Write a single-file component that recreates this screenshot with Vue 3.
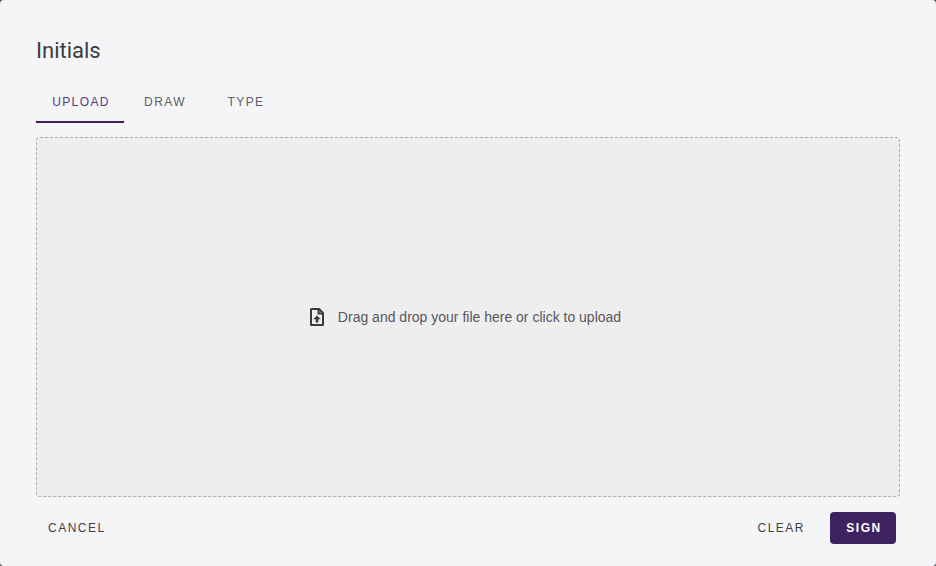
<script setup>
const tabs = ['UPLOAD', 'DRAW', 'TYPE']
</script>

<template>
  <div class="dialog">
    <h2 class="title">Initials</h2>
    <div class="tabs">
      <button v-for="(t, i) in tabs" :key="t" class="tab" :class="[{ active: i === 0 }, 't' + i]">{{ t }}</button>
    </div>
    <div class="drop">
      <svg class="icon" width="24" height="24" viewBox="0 0 24 24" fill="none">
        <path d="M6.500 4h7.500l4 4v11.500a.5.5 0 0 1-.5.5h-11a.5.5 0 0 1-.5-.5v-15a.5.5 0 0 1 .5-.5z" stroke="#3a3a3d" stroke-width="2" stroke-linejoin="round"/>
        <path d="M13.500 3.500v5h5" stroke="#3a3a3d" stroke-width="2"/>
        <path d="M12 10.500l3.700 3.700h-2.400v3.300h-2.600v-3.300h-2.400z" fill="#3a3a3d"/>
      </svg>
      <span class="hint">Drag and drop your file here or click to upload</span>
    </div>
    <div class="actions">
      <button class="btn text">CANCEL</button>
      <div class="right">
        <button class="btn text clear">CLEAR</button>
        <button class="btn primary">SIGN</button>
      </div>
    </div>
  </div>
</template>

<style>
html, body { margin: 0; background: #55555a; }
</style>

<style scoped>
.dialog {
  box-sizing: border-box;
  width: 936px;
  height: 566px;
  background: #f5f5f8;
  border-radius: 4px;
  padding: 36px 36px 22px;
  display: flex;
  flex-direction: column;
  font-family: "Liberation Sans", Arial, sans-serif;
}
.title {
  margin: 0;
  font: 400 22px/29px Roboto, sans-serif;
  color: #3c3c3f;
}
.tabs {
  display: flex;
  margin-top: 15px;
  height: 43px;
}
.tab {
  border: 0;
  background: none;
  padding: 2px 0 0;
  height: 43px;
  font: 400 12px/16px "Liberation Sans", Arial, sans-serif;
  letter-spacing: 1.4px;
  color: #5c5c62;
  box-sizing: border-box;
  border-bottom: 2px solid transparent;
}
.t0 { width: 88px; padding-left: 2px; }
.t1 { width: 82px; }
.t2 { width: 80px; }
.tab.active {
  color: #54397e;
  border-bottom-color: #3f2361;
}
.drop {
  flex: 1;
  margin-top: 14px;
  background: #eeeeef;
  border: 1px dashed #adadb0;
  border-radius: 4px;
  display: flex;
  align-items: center;
  justify-content: center;
  gap: 9px;
  padding: 0 4px 1px 0;
}
.icon { flex: none; margin-left: -6px; }
.hint {
  font-size: 14px;
  line-height: 20px;
  color: #57575c;
}
.actions {
  display: flex;
  justify-content: space-between;
  align-items: center;
  margin-top: 15px;
  height: 32px;
  padding: 0 4px;
}
.right { display: flex; align-items: center; gap: 17px; }
.btn {
  height: 32px;
  border: 0;
  border-radius: 4px;
  font: 400 12px/16px "Liberation Sans", Arial, sans-serif;
  letter-spacing: 1.500px;
  padding: 0 8px;
  background: none;
  color: #3f3f46;
}
.btn.primary {
  width: 66px;
  padding: 0 0 0 2px;
  background: #3f2361;
  color: #fff;
  font-weight: 700;
}
</style>
